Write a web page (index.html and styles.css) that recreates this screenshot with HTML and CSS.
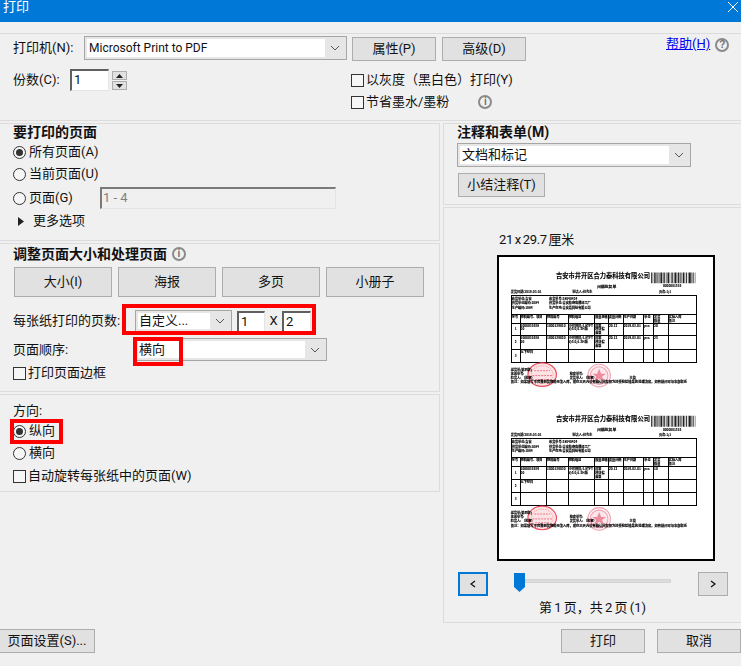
FILE: index.html
```html
<!DOCTYPE html>
<html lang="zh">
<head>
<meta charset="utf-8">
<title>打印</title>
<link rel="stylesheet" href="styles.css">
</head>
<body>
<div class="dialog">
  <header class="titlebar">
    <span class="title-text">打印</span>
    <svg class="close" width="10" height="10" viewBox="0 0 10 10"><path d="M0 0L10 10M10 0L0 10"/></svg>
  </header>

  <section class="top">
    <div class="top-row">
      <span class="label printer-label">打印机(N):</span>
      <div class="combo combo-printer"><span class="combo-text">Microsoft Print to PDF</span><span class="combo-arrow"><svg class="chev" width="10" height="6" viewBox="0 0 10 6"><path d="M1 1L5 5L9 1"/></svg></span></div>
      <button class="btn btn-prop">属性(P)</button>
      <button class="btn btn-adv">高级(D)</button>
      <a class="help" href="#">帮助(H)</a>
      <span class="badge badge-help">?</span>
    </div>
    <div class="copies-row">
      <span class="label copies-label">份数(C):</span>
      <div class="field field-copies">1</div>
      <div class="spinner">
        <span class="spin"><svg width="7" height="4" viewBox="0 0 7 4"><path class="tri" d="M3.5 0L7 4H0Z"/></svg></span>
        <span class="spin"><svg width="7" height="4" viewBox="0 0 7 4"><path class="tri" d="M0 0H7L3.5 4Z"/></svg></span>
      </div>
      <div class="options">
        <div class="opt"><span class="check"></span><span>以灰度（黑白色）打印(Y)</span></div>
        <div class="opt"><span class="check"></span><span>节省墨水/墨粉</span><span class="badge badge-ink">i</span></div>
      </div>
    </div>
  </section>

  <main class="main">
    <div class="col-left">
      <section class="panel p-range">
        <h2 class="heading h-range">要打印的页面</h2>
        <div class="opt opt-22"><span class="radio on"></span><span>所有页面(A)</span></div>
        <div class="opt opt-22"><span class="radio"></span><span>当前页面(U)</span></div>
        <div class="opt opt-22 opt-pages"><span class="radio"></span><span class="pages-label">页面(G)</span><div class="field-off">1 - 4</div></div>
        <div class="opt opt-22 more"><svg width="6" height="9" viewBox="0 0 6 9"><path class="tri" d="M0 0L6 4.5L0 9Z"/></svg><span>更多选项</span></div>
      </section>

      <section class="panel p-size">
        <div class="head-row"><h2 class="heading">调整页面大小和处理页面</h2><span class="badge badge-size">i</span></div>
        <div class="tabs">
          <button class="btn tab">大小(I)</button>
          <button class="btn tab">海报</button>
          <button class="btn tab">多页</button>
          <button class="btn tab">小册子</button>
        </div>
        <div class="form-row per-sheet">
          <span class="label form-label">每张纸打印的页数:</span>
          <div class="combo combo-custom"><span class="combo-text">自定义...</span><span class="combo-arrow"><svg class="chev" width="10" height="6" viewBox="0 0 10 6"><path d="M1 1L5 5L9 1"/></svg></span></div>
          <div class="field field-n1">1</div>
          <span class="times">X</span>
          <div class="field field-n2">2</div>
          <span class="mark mark-sheet"></span>
        </div>
        <div class="form-row order">
          <span class="label form-label">页面顺序:</span>
          <div class="combo combo-order"><span class="combo-text">横向</span><span class="combo-arrow"><svg class="chev" width="10" height="6" viewBox="0 0 10 6"><path d="M1 1L5 5L9 1"/></svg></span></div>
          <span class="mark mark-order"></span>
        </div>
        <div class="opt opt-22 border-opt"><span class="check"></span><span>打印页面边框</span></div>
      </section>

      <section class="panel p-orient">
        <div class="orient-label">方向:</div>
        <div class="opt opt-22 portrait"><span class="radio on"></span><span>纵向</span><span class="mark mark-portrait"></span></div>
        <div class="opt opt-22"><span class="radio"></span><span>横向</span></div>
        <div class="opt opt-22 rotate"><span class="check"></span><span>自动旋转每张纸中的页面(W)</span></div>
      </section>
    </div>

    <div class="col-right">
      <section class="panel-r p-notes">
        <h2 class="heading">注释和表单(M)</h2>
        <div class="combo combo-notes"><span class="combo-text">文档和标记</span><span class="combo-arrow"><svg class="chev" width="10" height="6" viewBox="0 0 10 6"><path d="M1 1L5 5L9 1"/></svg></span></div>
        <button class="btn btn-summary">小结注释(T)</button>
      </section>

      <section class="panel-r p-preview">
        <div class="paper-size">21 x 29.7 厘米</div>
        <svg class="sheet" width="218" height="306" viewBox="497 255 218 306">
          <defs>
            <g id="form">
              <text class="doc-title" x="555" y="275.5">吉安市井开区合力泰科技有限公司</text>
              <line class="barcode" x1="652" x2="697" y1="275.5" y2="275.5" stroke-dasharray="1 .6 .5 1 1.5 .5 .5 .8 1 1 .5 .5 2 .7 .6 .6 1 1.2 .5 .6 1.6 .6 .6 1 .6 .5 1 1.2 2 .5 .5 .7 1 .6"/>
              <text class="doc-s" x="664" y="285">0000001516</text>
              <text class="doc-b" x="597" y="285.5">问题批复单</text>
              <text class="doc-s" x="509" y="290.5">发货日期:2019-03-01</text>
              <text class="doc-s" x="572" y="290.5">制表人:任先生</text>
              <text class="doc-s" x="660" y="290.5">页次:1/1</text>
              <rect class="grid" x="509.5" y="293.5" width="189" height="19"/>
              <text class="doc-s" x="510" y="298">收货单位:吉安</text>
              <text class="doc-s" x="548" y="298">收货单号:28040424</text>
              <text class="doc-s" x="510" y="302.5">供货单位编码:1084</text>
              <text class="doc-s" x="548" y="302.5">供货单位:吉安精密电器加工厂</text>
              <text class="doc-s" x="510" y="307">生产编码:1084</text>
              <text class="doc-s" x="548" y="307">生产在地:吉安县科技有限公司</text>
              <path class="grid" d="M509.5 312.5V361.5H698.5V312.5M509.5 321.5H698.5M509.5 334.5H698.5M509.5 348.5H698.5M518.5 312.5V361.5M545.5 312.5V361.5M567.5 312.5V361.5M594.5 312.5V361.5M608.5 312.5V361.5M623.5 312.5V361.5M644.5 312.5V361.5M654.5 312.5V361.5M669.5 312.5V361.5"/>
              <text class="doc-s" x="510" y="316.5">序号</text>
              <text class="doc-s" x="519" y="316.5">物料编号、项目</text>
              <text class="doc-s" x="546" y="316.5">物料编号</text>
              <text class="doc-s" x="568" y="316.5">物料描述</text>
              <text class="doc-s" x="595" y="316.5">数量规格</text>
              <text class="doc-s" x="609" y="316.5">质量问题</text>
              <text class="doc-s" x="624" y="316.5">生产日期</text>
              <text class="doc-s" x="645" y="316.5">单位</text>
              <text class="doc-s" x="655" y="316.5">发货</text>
              <text class="doc-s" x="655" y="320">数量</text>
              <text class="doc-s" x="670" y="316.5">实际入库</text>
              <text class="doc-s" x="670" y="320">备注</text>
              <g class="stamp-a">
                <ellipse cx="541" cy="374" rx="14.5" ry="12"/>
                <ellipse class="stamp-inner" cx="541" cy="374" rx="11" ry="9"/>
                <path d="M533 370H549M531 375H551M534 379H548"/>
              </g>
              <g class="stamp-b">
                <circle cx="599" cy="375" r="11.5"/>
                <circle cx="599" cy="375" r="9"/>
                <polygon class="star" points="599,368 601,373 606,373 602,376 604,381 599,378 594,381 596,376 592,373 597,373"/>
              </g>
              <text class="doc-s" x="509" y="370">送货单(第四联)</text>
              <text class="doc-s" x="509" y="374">签收单号:</text>
              <text class="doc-s" x="569" y="374">检查单号:</text>
              <text class="doc-s" x="509" y="378.5">验货人: （签章）</text>
              <text class="doc-s" x="569" y="378.5">发货单人: （签章）</text>
              <text class="doc-s" x="630" y="378.5">主管</text>
              <text class="doc-b2" x="509" y="383">备注：如果填写不完整到货物料无法入库，或在三天内没有确认回复视为接受检验结果的处理决定。如有疑问可与本部联系</text>
            </g>
          </defs>
          <g class="doc">
            <use href="#form"/>
            <use href="#form" y="146"/>
            <text class="doc-s" x="519" y="325">1000031938</text>
            <text class="doc-s" x="519" y="329">00</text>
            <text class="doc-s" x="513" y="329">1</text>
            <text class="doc-s" x="546" y="325">1000136010</text>
            <text class="doc-s" x="568" y="325">小可视屏/1.8TFT</text>
            <text class="doc-s" x="568" y="329">V/5.0/1.5H版</text>
            <text class="doc-s" x="595" y="325">屏幕</text>
            <text class="doc-s" x="595" y="329">模块偏</text>
            <text class="doc-s" x="595" y="333">差等</text>
            <text class="doc-s" x="609" y="325">20.12</text>
            <text class="doc-s" x="624" y="325">2019-03-01</text>
            <text class="doc-s" x="645" y="325">pcs</text>
            <text class="doc-s" x="655" y="325">20</text>
            <text class="doc-s" x="519" y="338">1000031938</text>
            <text class="doc-s" x="519" y="342">00</text>
            <text class="doc-s" x="513" y="342">2</text>
            <text class="doc-s" x="546" y="338">1000136020</text>
            <text class="doc-s" x="568" y="338">小可视屏/1.8TFT</text>
            <text class="doc-s" x="568" y="342">V/5.0/1.5H版</text>
            <text class="doc-s" x="595" y="338">屏幕</text>
            <text class="doc-s" x="595" y="342">模块偏</text>
            <text class="doc-s" x="595" y="346">差等</text>
            <text class="doc-s" x="609" y="338">20.12</text>
            <text class="doc-s" x="624" y="338">2019-03-01</text>
            <text class="doc-s" x="645" y="338">pcs</text>
            <text class="doc-s" x="655" y="338">25</text>
            <text class="doc-s" x="519" y="352">以下空白</text>
            <text class="doc-s" x="513" y="356">3</text>
            <text class="doc-s" x="519" y="471">1000031939</text>
            <text class="doc-s" x="519" y="475">00</text>
            <text class="doc-s" x="513" y="475">1</text>
            <text class="doc-s" x="546" y="471">1000136030</text>
            <text class="doc-s" x="568" y="471">小可视屏/1.8TFT</text>
            <text class="doc-s" x="568" y="475">V/5.0/1.5H版</text>
            <text class="doc-s" x="595" y="471">屏幕</text>
            <text class="doc-s" x="595" y="475">模块偏</text>
            <text class="doc-s" x="595" y="479">差等</text>
            <text class="doc-s" x="609" y="471">20.12</text>
            <text class="doc-s" x="624" y="471">2019-03-01</text>
            <text class="doc-s" x="645" y="471">pcs</text>
            <text class="doc-s" x="655" y="471">10</text>
            <text class="doc-s" x="519" y="484">以下空白</text>
            <text class="doc-s" x="513" y="488">2</text>
            <text class="doc-s" x="513" y="502">3</text>
          </g>
        </svg>
        <div class="pager">
          <button class="btn nav nav-focus"><svg width="6" height="8" viewBox="0 0 6 8"><path class="nav-arrow" d="M5 1L1 4L5 7"/></svg></button>
          <div class="slider">
            <svg class="thumb" width="11" height="19" viewBox="0 0 11 19"><path d="M0 0H11V14L5.5 19L0 14Z"/></svg>
            <span class="track"></span>
          </div>
          <button class="btn nav"><svg width="6" height="8" viewBox="0 0 6 8"><path class="nav-arrow" d="M1 1L5 4L1 7"/></svg></button>
        </div>
        <div class="page-info">第 1 页，共 2 页 (1)</div>
      </section>
    </div>
  </main>

  <footer class="footer">
    <button class="btn btn-setup">页面设置(S)...</button>
    <button class="btn btn-print">打印</button>
    <button class="btn btn-cancel">取消</button>
  </footer>
</div>
</body>
</html>
```

FILE: styles.css
```css
* { box-sizing: border-box; }
html, body { margin: 0; padding: 0; }
body {
  width: 741px;
  height: 666px;
  overflow: hidden;
  background: #f0f0f0;
  color: #111;
  font: 13px/16px Roboto, "Noto Sans CJK SC", sans-serif;
}
.dialog { width: 741px; height: 666px; display: flex; flex-direction: column; }

.titlebar {
  flex: none;
  height: 22px;
  background: #0078d7;
  display: flex;
  justify-content: space-between;
  color: #fff;
}
.title-text { margin-left: 3px; line-height: 14px; height: 14px; }
.close { margin: 2px 3px 0 0; }
.close path { stroke: #fff; stroke-width: 1; fill: none; }

.top {
  flex: none;
  margin-top: 11px;
  height: 88px;
  border-top: 1px solid #dcdcdc;
  border-bottom: 1px solid #dcdcdc;
  padding-top: 2px;
}
.top-row { display: flex; align-items: flex-start; height: 25px; }
.printer-label { width: 84px; padding-left: 13px; line-height: 24px; }
.btn {
  font: inherit;
  color: #111;
  background: #e1e1e1;
  border: 1px solid #adadad;
  padding: 0;
  height: 24px;
  display: flex;
  align-items: center;
  justify-content: center;
}
.btn-prop { width: 84px; margin: 1px 0 0 5px; }
.btn-adv { width: 84px; margin: 1px 0 0 6px; }
.help { margin-left: 140px; color: #0000ee; line-height: 16px; text-decoration: underline; white-space: nowrap; }
.badge {
  flex: none;
  width: 14px;
  height: 14px;
  border: 2px solid #8a8a8a;
  border-radius: 50%;
  color: #6f6f6f;
  font: bold 10px/10px "Liberation Sans", sans-serif;
  text-align: center;
}
.badge-help { margin: 2px 0 0 5px; }
.badge-ink { margin-left: 29px; }
.badge-size { margin-left: 5px; }

.combo {
  display: flex;
  border: 1px solid #a6a6a6;
  background: #e6e6e6;
  padding: 2px;
  flex: none;
}
.combo-text { flex: 1; background: #fff; padding-left: 2px; line-height: 18px; white-space: nowrap; overflow: hidden; }
.combo-arrow { flex: none; width: 19px; display: flex; align-items: center; justify-content: center; }
.chev path { stroke: #555; stroke-width: 1; fill: none; }
.combo-printer { width: 263px; height: 24px; }
.combo-printer .combo-text { font-size: 12px; padding-left: 2px; }
.combo-custom { width: 97px; height: 22px; }
.combo-custom .combo-text { line-height: 16px; padding-left: 1px; }
.combo-order { width: 192px; height: 23px; }
.combo-order .combo-text { padding-left: 1px; line-height: 17px; }
.combo-notes { width: 234px; height: 24px; margin-top: 3px; }

.copies-row { display: flex; align-items: flex-start; margin-top: 8px; }
.copies-label { width: 70px; padding-left: 13px; line-height: 22px; }
.field {
  flex: none;
  background: #fff;
  border-style: solid;
  border-width: 2px 1px 1px 2px;
  border-color: #5f5f5f #e4e4e4 #e4e4e4 #5f5f5f;
  padding-left: 2px;
  line-height: 17px;
  color: #111;
}
.field-copies { width: 39px; height: 22px; }
.spinner { flex: none; margin: 2px 0 0 3px; display: flex; flex-direction: column; gap: 1px; }
.spin { width: 15px; height: 9px; background: #e1e1e1; border: 1px solid #adadad; display: flex; align-items: center; justify-content: center; }
.tri { fill: #222; }
.options { margin-left: 224px; }
.opt { display: flex; align-items: center; height: 22px; white-space: nowrap; }
.check { flex: none; width: 13px; height: 13px; border: 1px solid #333; background: #f6f6f6; margin-right: 2px; }
.radio {
  flex: none;
  width: 13px;
  height: 13px;
  border: 1px solid #333;
  border-radius: 50%;
  background: #f6f6f6;
  margin-right: 3px;
  display: flex;
  align-items: center;
  justify-content: center;
}
.radio.on::after { content: ""; width: 7px; height: 7px; border-radius: 50%; background: #333; }

.main { flex: none; height: 500px; margin-top: 2px; display: flex; }
.col-left { flex: none; width: 440px; display: flex; flex-direction: column; gap: 2px; }
.col-right { flex: none; width: 298px; margin-left: 3px; display: flex; flex-direction: column; gap: 2px; }

.panel { border: 1px solid #dcdcdc; border-left: 0; padding-left: 13px; }
.panel-r { border: 1px solid #dcdcdc; border-right: 0; }
.heading { margin: 0; font-size: 14px; font-weight: 700; line-height: 16px; white-space: nowrap; }
.label { flex: none; white-space: nowrap; }

.p-range { height: 118px; }
.h-range { height: 17px; }
.opt-pages { margin-top: 2px; }
.pages-label { width: 71px; }
.field-off {
  width: 236px;
  height: 22px;
  border-style: solid;
  border-width: 2px 1px 1px 2px;
  border-color: #7a7a7a #e4e4e4 #e4e4e4 #7a7a7a;
  color: #7f7f7f;
  line-height: 17px;
  padding-left: 1px;
}
.more { margin: 1px 0 0 5px; }
.more span { margin-left: 9px; }

.p-size { height: 149px; }
.head-row { display: flex; align-items: center; margin-top: 1px; height: 18px; }
.tabs { display: flex; gap: 6px; margin: 4px 0 0 1px; }
.tab { width: 98px; height: 30px; }
.form-row { position: relative; display: flex; align-items: center; margin-left: -13px; }
.form-label { width: 135px; padding-left: 13px; }
.per-sheet { margin-top: 13px; height: 22px; }
.order { margin-top: 6px; height: 23px; }
.field-n1 { width: 28px; height: 21px; margin-left: 5px; }
.field-n2 { width: 29px; height: 21px; }
.times { width: 17px; text-align: center; }
.border-opt { margin-top: 1px; }
.mark { position: absolute; border: 4px solid #f00; }
.mark-sheet { left: 122px; top: -6px; width: 194px; height: 31px; }
.mark-order { left: 133px; top: -1px; width: 50px; height: 29px; }
.portrait { position: relative; }
.mark-portrait { left: -3px; top: -1px; width: 53px; height: 25px; }

.p-orient { height: 98px; }
.orient-label { margin-top: 8px; height: 17px; }
.rotate { margin-top: 1px; }

.p-notes { height: 82px; padding-left: 13px; }
.btn-summary { width: 87px; height: 24px; margin: 6px 0 0 1px; }
.p-preview { height: 416px; display: flex; flex-direction: column; }
.paper-size { margin: 24px 0 0 55px; height: 16px; word-spacing: -1px; letter-spacing: -.35px; }
.sheet { display: block; margin: 7px 0 0 53px; background: #fff; border: 2px solid #000; flex: none; overflow: hidden; }
.sheet text { font-family: "Noto Sans CJK SC", sans-serif; fill: #000; stroke: #000; stroke-width: .12px; }
.doc { filter: blur(.22px); }
.doc-title { font-size: 6.4px; font-weight: 700; }
.doc-b { font-size: 3.9px; font-weight: 700; }
.doc-b2 { font-size: 3.35px; font-weight: 700; }
.doc-s { font-size: 3.2px; font-weight: 700; }
.barcode { stroke: #222; stroke-width: 11; }
.grid { fill: none; stroke: #000; stroke-width: 1; shape-rendering: crispEdges; }
.stamp-a ellipse { fill: rgba(235, 60, 75, .14); stroke: #ea4a58; stroke-width: 1.2; }
.stamp-a .stamp-inner { fill: none; stroke: rgba(234, 74, 88, .5); stroke-width: .8; stroke-dasharray: 1.5 1; }
.stamp-a path { fill: none; stroke: rgba(225, 40, 60, .6); stroke-width: 1; stroke-dasharray: 2 1; }
.stamp-b circle { fill: rgba(240, 130, 150, .1); stroke: #f0a2b2; stroke-width: 1.1; }
.star { fill: #ee8ba0; }

.pager { display: flex; align-items: flex-start; margin: 11px 0 0 14px; flex: none; }
.nav { width: 30px; height: 24px; }
.nav-focus { border: 2px solid #0078d7; }
.nav-arrow { fill: none; stroke: #111; stroke-width: 1.3; }
.slider { display: flex; align-items: flex-start; width: 157px; margin: 1px 27px 0 26px; }
.thumb { flex: none; }
.thumb path { fill: #0078d7; }
.track { flex: 1; height: 4px; margin-top: 6px; background: #dcdcdc; border: 1px solid #d4d4d4; }
.page-info { margin-top: 4px; text-align: center; height: 16px; word-spacing: -1px; }

.footer { flex: none; display: flex; margin-top: 6px; }
.btn-setup { width: 95px; border-left: 0; }
.btn-print { width: 84px; margin-left: 466px; }
.btn-cancel { width: 84px; margin-left: 12px; }
```
